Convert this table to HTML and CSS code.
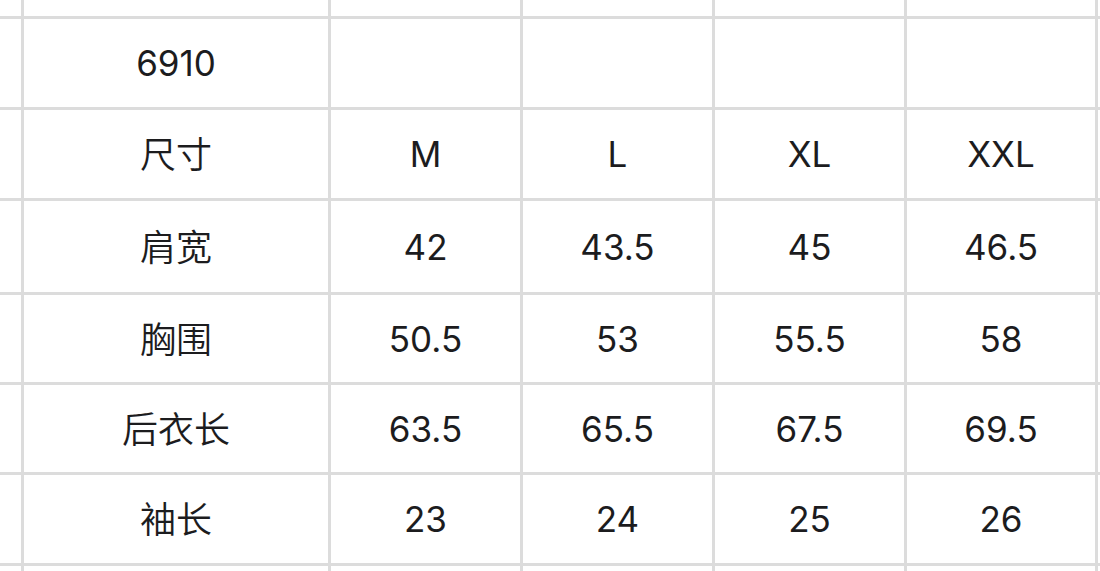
FILE: index.html
```html
<!DOCTYPE html>
<html lang="zh">
<head>
<meta charset="utf-8">
<link rel="stylesheet" href="styles.css">
</head>
<body>
<div class="sheet">
  <div class="grid">
    <div class="c"></div><div class="c"></div><div class="c"></div><div class="c"></div><div class="c"></div><div class="c"></div><div class="c"></div>
    <div class="c"></div><div class="c">6910</div><div class="c"></div><div class="c"></div><div class="c"></div><div class="c"></div><div class="c"></div>
    <div class="c"></div><div class="c cn">尺寸</div><div class="c">M</div><div class="c">L</div><div class="c">XL</div><div class="c">XXL</div><div class="c"></div>
    <div class="c"></div><div class="c cn">肩宽</div><div class="c">42</div><div class="c">43.5</div><div class="c">45</div><div class="c">46.5</div><div class="c"></div>
    <div class="c"></div><div class="c cn">胸围</div><div class="c">50.5</div><div class="c">53</div><div class="c">55.5</div><div class="c">58</div><div class="c"></div>
    <div class="c"></div><div class="c cn">后衣长</div><div class="c">63.5</div><div class="c">65.5</div><div class="c">67.5</div><div class="c">69.5</div><div class="c"></div>
    <div class="c"></div><div class="c cn">袖长</div><div class="c">23</div><div class="c">24</div><div class="c">25</div><div class="c">26</div><div class="c"></div>
    <div class="c"></div><div class="c"></div><div class="c"></div><div class="c"></div><div class="c"></div><div class="c"></div><div class="c"></div>
  </div>
</div>
</body>
</html>
```

FILE: styles.css
```css
html, body {
  margin: 0;
  padding: 0;
  background: #ffffff;
}
.sheet {
  width: 1100px;
  height: 571px;
  overflow: hidden;
}
.grid {
  display: grid;
  grid-template-columns: 21px 304px 189px 189px 189px 188px 2px;
  grid-template-rows: 16px 88px 88px 91px 87px 87px 88px 20px;
  gap: 3px;
  background: #dcdcdc;
  width: 1100px;
}
.c {
  background: #ffffff;
  display: flex;
  align-items: center;
  justify-content: center;
  font-family: "Inter", "Noto Sans CJK SC", sans-serif;
  font-size: 35px;
  color: #1c1c1e;
  overflow: hidden;
}
.cn {
  font-size: 36px;
  font-weight: 350;
  padding-bottom: 4px;
  box-sizing: border-box;
}
```
